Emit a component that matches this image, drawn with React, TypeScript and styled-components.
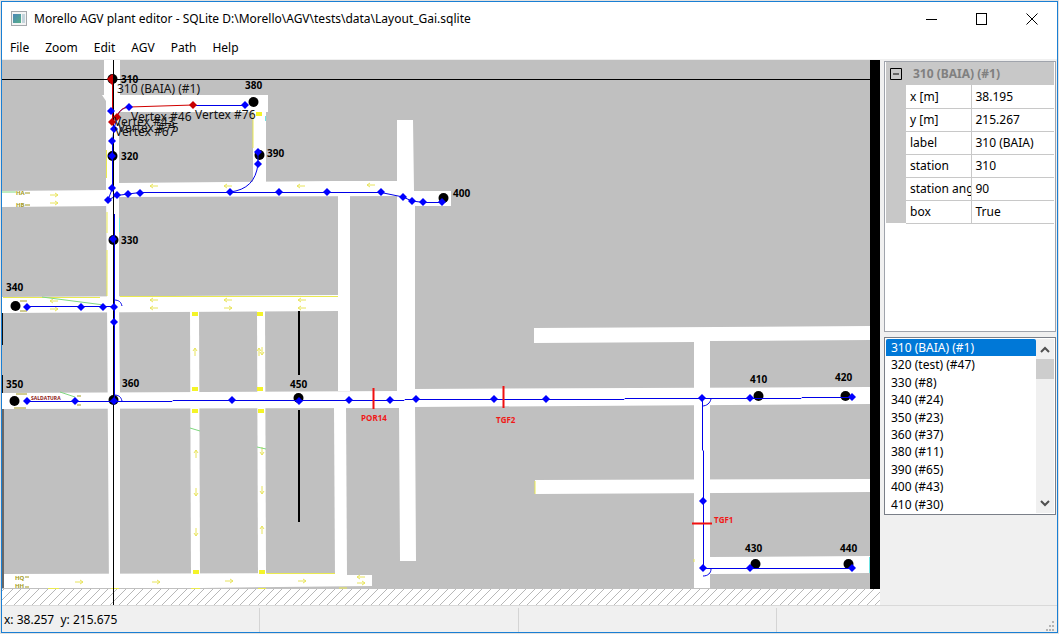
import React from "react";
import styled, { createGlobalStyle } from "styled-components";

const GlobalStyle = createGlobalStyle`
  * { box-sizing: border-box; }
  body { margin: 0; background: #e4e2e0; }
  body, button, select, table {
    font-family: "Noto Sans", "Open Sans", sans-serif;
    font-size: 12px;
    color: #000;
  }
`;

const Frame = styled.div`
  min-height: 100vh;
  padding: 1px;
  display: flex;
`;

const AppWindow = styled.div`
  flex: 1;
  min-width: 0;
  display: flex;
  flex-direction: column;
  border: 1px solid #1a7fd4;
  background: #f0f0f0;
`;

const TitleBar = styled.header`
  display: flex;
  align-items: center;
  height: 34px;
  padding-left: 9px;
  background: #fff;
`;

const Title = styled.h1`
  flex: 1;
  margin: 0 0 0 7px;
  font-size: 12px;
  font-weight: 400;
  line-height: 18px;
  white-space: nowrap;
`;

const CaptionButton = styled.button`
  display: flex;
  align-items: center;
  justify-content: center;
  width: 50px;
  height: 34px;
  padding: 0;
  border: 0;
  background: transparent;
`;

const MenuBar = styled.nav`
  display: flex;
  height: 24px;
  background: #fff;
  border-bottom: 1px solid #f0f0f0;
`;

const MenuButton = styled.button`
  padding: 0 8px;
  border: 0;
  background: transparent;
`;

const Main = styled.main`
  flex: 1;
  display: flex;
  min-height: 0;
`;

const Canvas = styled.div`
  flex: 1;
  min-width: 0;
  background: #fff;
`;

const Plan = styled.svg`
  display: block;
  width: 100%;
  height: 545px;
`;

const SidePanel = styled.aside`
  width: 177px;
  padding: 1px 1px 0 4px;
  display: flex;
  flex-direction: column;
  gap: 5px;
`;

const PropertyPane = styled.section`
  height: 271px;
  padding: 0 1px;
  border: 1px solid #a0a4ac;
  background: #fff;
`;

const PropertyTable = styled.table`
  width: 100%;
  table-layout: fixed;
  border-collapse: collapse;
`;

const GutterColumn = styled.col`
  width: 20px;
`;

const NameColumn = styled.col`
  width: 65px;
`;

const GroupCell = styled.th`
  height: 23px;
  padding: 0;
  background: #c8c8c8;
  color: #808080;
  font-weight: 700;
  text-align: left;
`;

const GroupHead = styled.div`
  display: flex;
  align-items: center;
  gap: 11px;
  padding-left: 4px;
`;

const FoldButton = styled.button`
  width: 12px;
  height: 12px;
  padding: 0;
  border: 0;
  background: transparent;
  display: flex;
`;

const Gutter = styled.td`
  padding: 0;
  background: #c8c8c8;
`;

const NameCell = styled.th`
  height: 23px;
  padding: 0 0 0 4px;
  border: 1px solid #c8c8c8;
  border-width: 0 1px 1px 0;
  font-weight: 400;
  text-align: left;
  white-space: nowrap;
  overflow: hidden;
`;

const ValueCell = styled.td`
  padding: 0 0 0 4px;
  border-bottom: 1px solid #c8c8c8;
  white-space: nowrap;
`;

const ListPane = styled.section`
  display: flex;
  height: 178px;
  padding: 1px;
  border: 1px solid #7a7f88;
  background: #fff;
`;

const StationList = styled.select`
  flex: 1;
  min-width: 0;
  height: 174px;
  padding: 0;
  border: 0;
  outline: 0;
  overflow: hidden;
  background: #fff;

  option {
    display: block;
    height: 10%;
    min-height: 0;
    padding: 0 0 0 5px;
    line-height: 17px;
  }
  option:checked {
    background-image: linear-gradient(#0078d7, #0078d7);
    -webkit-text-fill-color: #fff;
  }
`;

const ScrollTrack = styled.div`
  width: 18px;
  display: flex;
  flex-direction: column;
  background: #f0f0f0;
`;

const ScrollArrow = styled.button`
  display: flex;
  align-items: center;
  justify-content: center;
  height: 20px;
  padding: 0;
  border: 0;
  background: transparent;
`;

const ScrollThumb = styled.div`
  height: 20px;
  margin-bottom: auto;
  background: #cdcdcd;
`;

const StatusBar = styled.footer`
  display: grid;
  grid-template-columns: repeat(4, 1fr) 22px;
  height: 27px;
  padding: 2px 0 1px;
  border-top: 1px solid #d9d9d9;
  line-height: 24px;
`;

const StatusField = styled.div<{ $last?: boolean }>`
  padding-left: 2px;
  border-right: ${(p) => (p.$last ? "0" : "1px solid #d4d4d4")};
  white-space: pre;
`;

const Grip = styled.svg`
  align-self: end;
  justify-self: end;
`;

const menus = ["File", "Zoom", "Edit", "AGV", "Path", "Help"];

const properties = [
  ["x [m]", "38.195"],
  ["y [m]", "215.267"],
  ["label", "310 (BAIA)"],
  ["station", "310"],
  ["station angle", "90"],
  ["box", "True"],
];

const stations = [
  "310 (BAIA) (#1)",
  "320 (test) (#47)",
  "330 (#8)",
  "340 (#24)",
  "350 (#23)",
  "360 (#37)",
  "380 (#11)",
  "390 (#65)",
  "400 (#43)",
  "410 (#30)",
];

// White corridors of the plant
const roads = [
  "104,60 120,60 120,95 268,95 268,112 119,112 119,184 119,300 120,393 120,588 109,588 107,300 106,186 106,101 102,95 104,95",
  "253,112 266,112 266,183 253,183",
  "118,183 334,181 397,181 397,120 413,120 414,191 451,191 451,206 415,206 415,389 870,387 870,404 415,407 416,561 400,561 399,408 397,408 397,196 118,197",
  "2,191 108,190 108,206 2,207",
  "338,196 350,196 350,391 338,391",
  "334,407 346,407 347,575 335,575",
  "2,297 338,295 338,311 2,313",
  "2,393 398,391 398,408 2,409",
  "190,311 199,311 200,575 191,575",
  "257,311 265,311 266,575 258,575",
  "4,574 335,573 335,575 372,575 372,586 200,588 4,588",
  "534,328 870,326 870,340 710,341 710,588 694,588 694,342 534,343",
  "535,480 870,479 870,492 535,494",
  "710,557 870,556 870,573 710,574",
];

const yellowEdges =
  "M106.500 150V178M107 212V233M107 250V296M120 296.500H338M253 112V148M3 297.500H100M266.500 573.500H335M535 481V494M59 588.500H48M111 588.500H119M191 588.500H200M258 588.500H266M339 588H347M694 559V562";

const yellowBlocks: [number, number][] = [
  [195, 314], [260, 314], [195, 389], [260, 389], [195, 411], [261, 411], [196, 572], [262, 572], [259, 114],
];

// x, y, direction of the traffic arrows painted on the floor
const arrows: [number, number, number][] = [
  [154, 186, 180], [228, 186, 180], [301, 186, 180], [371, 185, 180],
  [54, 195, 0], [54, 203, 0], [54, 301, 180], [54, 309, 0],
  [154, 300, 180], [154, 308, 180], [228, 300, 180], [228, 308, 0],
  [302, 300, 180], [302, 308, 180],
  [195, 352, 270], [259, 352, 270], [262, 351, 90],
  [196, 454, 270], [196, 492, 90], [196, 532, 90],
  [262, 451, 90], [262, 490, 90], [262, 530, 270],
  [79, 582, 0], [156, 582, 0], [229, 581, 0], [302, 581, 0],
  [361, 577, 180], [361, 583, 0],
];

const stationDots: [number, number][] = [
  [112, 79], [253, 102], [112, 156], [259, 155], [443, 198], [113, 240],
  [15, 306], [14, 401], [113, 400], [298, 398], [758, 396], [845, 396],
  [755, 564], [848, 564],
];

const stationLabels: [string, number, number][] = [
  ["310", 121, 83], ["380", 245, 89], ["320", 121, 160], ["390", 267, 157],
  ["400", 453, 197], ["330", 121, 244], ["340", 6, 291], ["350", 6, 388],
  ["360", 122, 387], ["450", 290, 388], ["410", 750, 383], ["420", 835, 381],
  ["430", 745, 552], ["440", 840, 552],
];

const vertices: [number, number][] = [
  [111, 111], [129, 107], [245, 105], [114, 129], [112, 141], [112, 188],
  [108, 200], [117, 195], [128, 194], [140, 193], [230, 192], [279, 192],
  [327, 192], [381, 192], [403, 197], [412, 201], [423, 202], [442, 202],
  [258, 152], [258, 164], [27, 307], [81, 307], [103, 307], [114, 307],
  [114, 322], [27, 401], [75, 401], [232, 400], [299, 401], [349, 400],
  [390, 400], [416, 399], [494, 399], [546, 399], [702, 398], [750, 398],
  [852, 397], [703, 501], [703, 568], [750, 568], [852, 568], [112, 156],
  [113, 239], [114, 401],
];

const selectedVertices: [number, number][] = [[193, 105], [117, 117], [112, 122]];

const vertexLabels: [string, number, number][] = [
  ["310 (BAIA) (#1)", 117, 93],
  ["Vertex #46", 131, 121],
  ["Vertex #76", 195, 119],
  ["Vertex #43", 114, 126],
  ["Vertex #75", 118, 132],
  ["Vertex #67", 115, 136],
];

const diamond = (x: number, y: number) => `M${x - 4} ${y}l4 -4l4 4l-4 4z`;

function PlantPlan() {
  return (
    <Plan role="img" aria-label="Plant layout">
      <g transform="translate(-2 -60)">
        <rect x="2" y="60" width="868" height="529" fill="#c0c0c0" />
        {roads.map((points) => (
          <polygon key={points} points={points} fill="#fff" />
        ))}
        <path d="M2.500 313V345M2.500 375V393M3 409V588" stroke="#111" fill="none" />
        <rect x="870" y="60" width="10" height="529" fill="#000" />
        <path d={yellowEdges} stroke="#eaea50" fill="none" />
        {yellowBlocks.map(([x, y]) => (
          <rect key={`${x}-${y}`} x={x - 3} y={y - 2} width="6" height="4" fill="#f4f428" />
        ))}
        {arrows.map(([x, y, turn]) => (
          <path
            key={`${x}-${y}`}
            d="M-4 0H4M1 -2L4 0L1 2"
            transform={`translate(${x} ${y}) rotate(${turn})`}
            stroke="#e8e45c"
            fill="none"
          />
        ))}
        <path d="M42 297L104 305M60 392L75 397M190 428L200 431M257 447L266 449M2 192H16" stroke="#80d880" fill="none" />
        <path d="M119.500 218V232M869.500 557V573M265.500 116V121" stroke="#70e4e4" fill="none" />
        <g fill="#a39a20" fontFamily="Open Sans" fontSize="6" fontWeight="700">
          <text x="16" y="195">HA</text>
          <text x="16" y="207">HB</text>
          <text x="15" y="580">HQ</text>
          <text x="15" y="588">HH</text>
        </g>
        <path d="M25 193H30M25 205H30M25 577H29M25 587H29M20 301H27M20 311H27M14 408H26M16 394H27M77 396H81M77 405H81" stroke="#a39a20" />

        <path d="M299 311V375M299 410V522" stroke="#000" strokeWidth="2" />
        {stationDots.map(([x, y]) => (
          <circle key={`${x}-${y}`} cx={x + 0.5} cy={y} r="5" fill="#000" />
        ))}
        <g fill="#000" fontFamily="Open Sans" fontSize="10" fontWeight="700">
          {stationLabels.map(([label, x, y]) => (
            <text key={label} x={x} y={y}>{label}</text>
          ))}
        </g>
        <g fill="#f01818" fontFamily="Open Sans" fontSize="8" fontWeight="700">
          <text x="361" y="421">POR14</text>
          <text x="496" y="423">TGF2</text>
          <text x="714" y="523">TGF1</text>
        </g>
        <text x="31" y="400" fill="#8c1414" fontFamily="Open Sans" fontSize="5" fontWeight="700">SALDATURA</text>

        <path
          d="M112.500 141V188L108 200L117 195.500L128 194L140 192.500H381L403 197L412 201L424 202.500H442M230 192C247 190 256 181 258 164V152M129 107C122 108 118 112 117 117L114 129L112.500 141M193 105.500H245M114.500 214V401M27 306.500H114M114 300C119 300 121 302 122 306M27 401.500L172 401.500L173 400.500H404L405 399.500H624L625 398.500H801L802 397.500H852M114 395C119 395 121 397 122 401M702.500 398V450L703.500 451V568.500H852M702 406C707 406 710 403 711 399M703 576C708 576 711 573 711 569"
          stroke="#0000e8"
          fill="none"
        />
        <path d="M373.500 388V409M503.500 386V408M692 523.500H712" stroke="#f01010" strokeWidth="2" />
        <path
          d={Array.from({ length: 300 }, (_, i) => `M${Math.round(i * 8.7) - 12} 605l16 -16`).join("")}
          stroke="#b8b8b8"
        />
        <path d="M113.500 60V605M2 79.500H870" stroke="#000" />
        <path d="M112.500 79V122L117 117C119 111 123 107 129 107L193 105" stroke="#d00000" fill="none" />
        <path d="M107 79L112 74L113 75V84L112 85z" fill="#c80000" />
        <path d={vertices.map(([x, y]) => diamond(x, y)).join("")} fill="#0000ff" />
        <path d={selectedVertices.map(([x, y]) => diamond(x, y)).join("")} fill="#c80000" />
        <g fill="#111" fontFamily="Noto Sans" fontSize="12">
          {vertexLabels.map(([label, x, y]) => (
            <text key={label} x={x} y={y}>{label}</text>
          ))}
        </g>
      </g>
    </Plan>
  );
}

export default function App() {
  return (
    <>
      <GlobalStyle />
      <Frame>
        <AppWindow>
          <TitleBar>
            <svg width="16" height="16" viewBox="0 0 16 16" aria-hidden="true">
              <defs>
                <linearGradient id="pane" x1="0" y1="0" x2="1" y2="1">
                  <stop offset="0" stopColor="#4a86b8" />
                  <stop offset="1" stopColor="#58b088" />
                </linearGradient>
              </defs>
              <rect x="0.500" y="0.500" width="15" height="14" fill="#f4f4f4" stroke="#a4a8ac" />
              <rect x="2" y="3" width="8" height="9" fill="url(#pane)" />
              <rect x="11" y="3" width="3" height="9" fill="#c4d4dc" />
            </svg>
            <Title>Morello AGV plant editor - SQLite D:\Morello\AGV\tests\data\Layout_Gai.sqlite</Title>
            <CaptionButton aria-label="Minimize">
              <svg width="12" height="12"><path d="M0 6.500H11" stroke="#000" /></svg>
            </CaptionButton>
            <CaptionButton aria-label="Maximize">
              <svg width="12" height="12"><rect x="0.500" y="0.500" width="10" height="11" fill="none" stroke="#000" /></svg>
            </CaptionButton>
            <CaptionButton aria-label="Close">
              <svg width="12" height="12"><path d="M0.500 0.500L11.500 11.500M11.500 0.500L0.500 11.500" stroke="#000" /></svg>
            </CaptionButton>
          </TitleBar>
          <MenuBar>
            {menus.map((name) => (
              <MenuButton key={name}>{name}</MenuButton>
            ))}
          </MenuBar>
          <Main>
            <Canvas>
              <PlantPlan />
            </Canvas>
            <SidePanel>
              <PropertyPane>
                <PropertyTable>
                  <colgroup>
                    <GutterColumn />
                    <NameColumn />
                    <col />
                  </colgroup>
                  <thead>
                    <tr>
                      <GroupCell colSpan={3}>
                        <GroupHead>
                          <FoldButton aria-label="Collapse group">
                            <svg width="12" height="12">
                              <path d="M0.500 0.500H11.500V11.500H0.500zM3 6H9" fill="none" stroke="#000" />
                            </svg>
                          </FoldButton>
                          310 (BAIA) (#1)
                        </GroupHead>
                      </GroupCell>
                    </tr>
                  </thead>
                  <tbody>
                    {properties.map(([name, value]) => (
                      <tr key={name}>
                        <Gutter />
                        <NameCell scope="row">{name}</NameCell>
                        <ValueCell>{value}</ValueCell>
                      </tr>
                    ))}
                  </tbody>
                </PropertyTable>
              </PropertyPane>
              <ListPane>
                <StationList size={10} defaultValue={stations[0]} aria-label="Stations">
                  {stations.map((name) => (
                    <option key={name}>{name}</option>
                  ))}
                </StationList>
                <ScrollTrack>
                  <ScrollArrow aria-label="Scroll up">
                    <svg width="10" height="7"><path d="M1 6L5 2L9 6" fill="none" stroke="#505050" strokeWidth="2" /></svg>
                  </ScrollArrow>
                  <ScrollThumb />
                  <ScrollArrow aria-label="Scroll down">
                    <svg width="10" height="7"><path d="M1 1L5 5L9 1" fill="none" stroke="#505050" strokeWidth="2" /></svg>
                  </ScrollArrow>
                </ScrollTrack>
              </ListPane>
            </SidePanel>
          </Main>
          <StatusBar>
            <StatusField>{"x: 38.257  y: 215.675"}</StatusField>
            <StatusField />
            <StatusField />
            <StatusField $last />
            <Grip width="12" height="12" aria-hidden="true">
              <path d="M7 1h2v2h-2zM4 5h2v2h-2zM7 5h2v2h-2zM1 9h2v2h-2zM4 9h2v2h-2zM7 9h2v2h-2z" fill="#b4b4b4" />
            </Grip>
          </StatusBar>
        </AppWindow>
      </Frame>
    </>
  );
}
